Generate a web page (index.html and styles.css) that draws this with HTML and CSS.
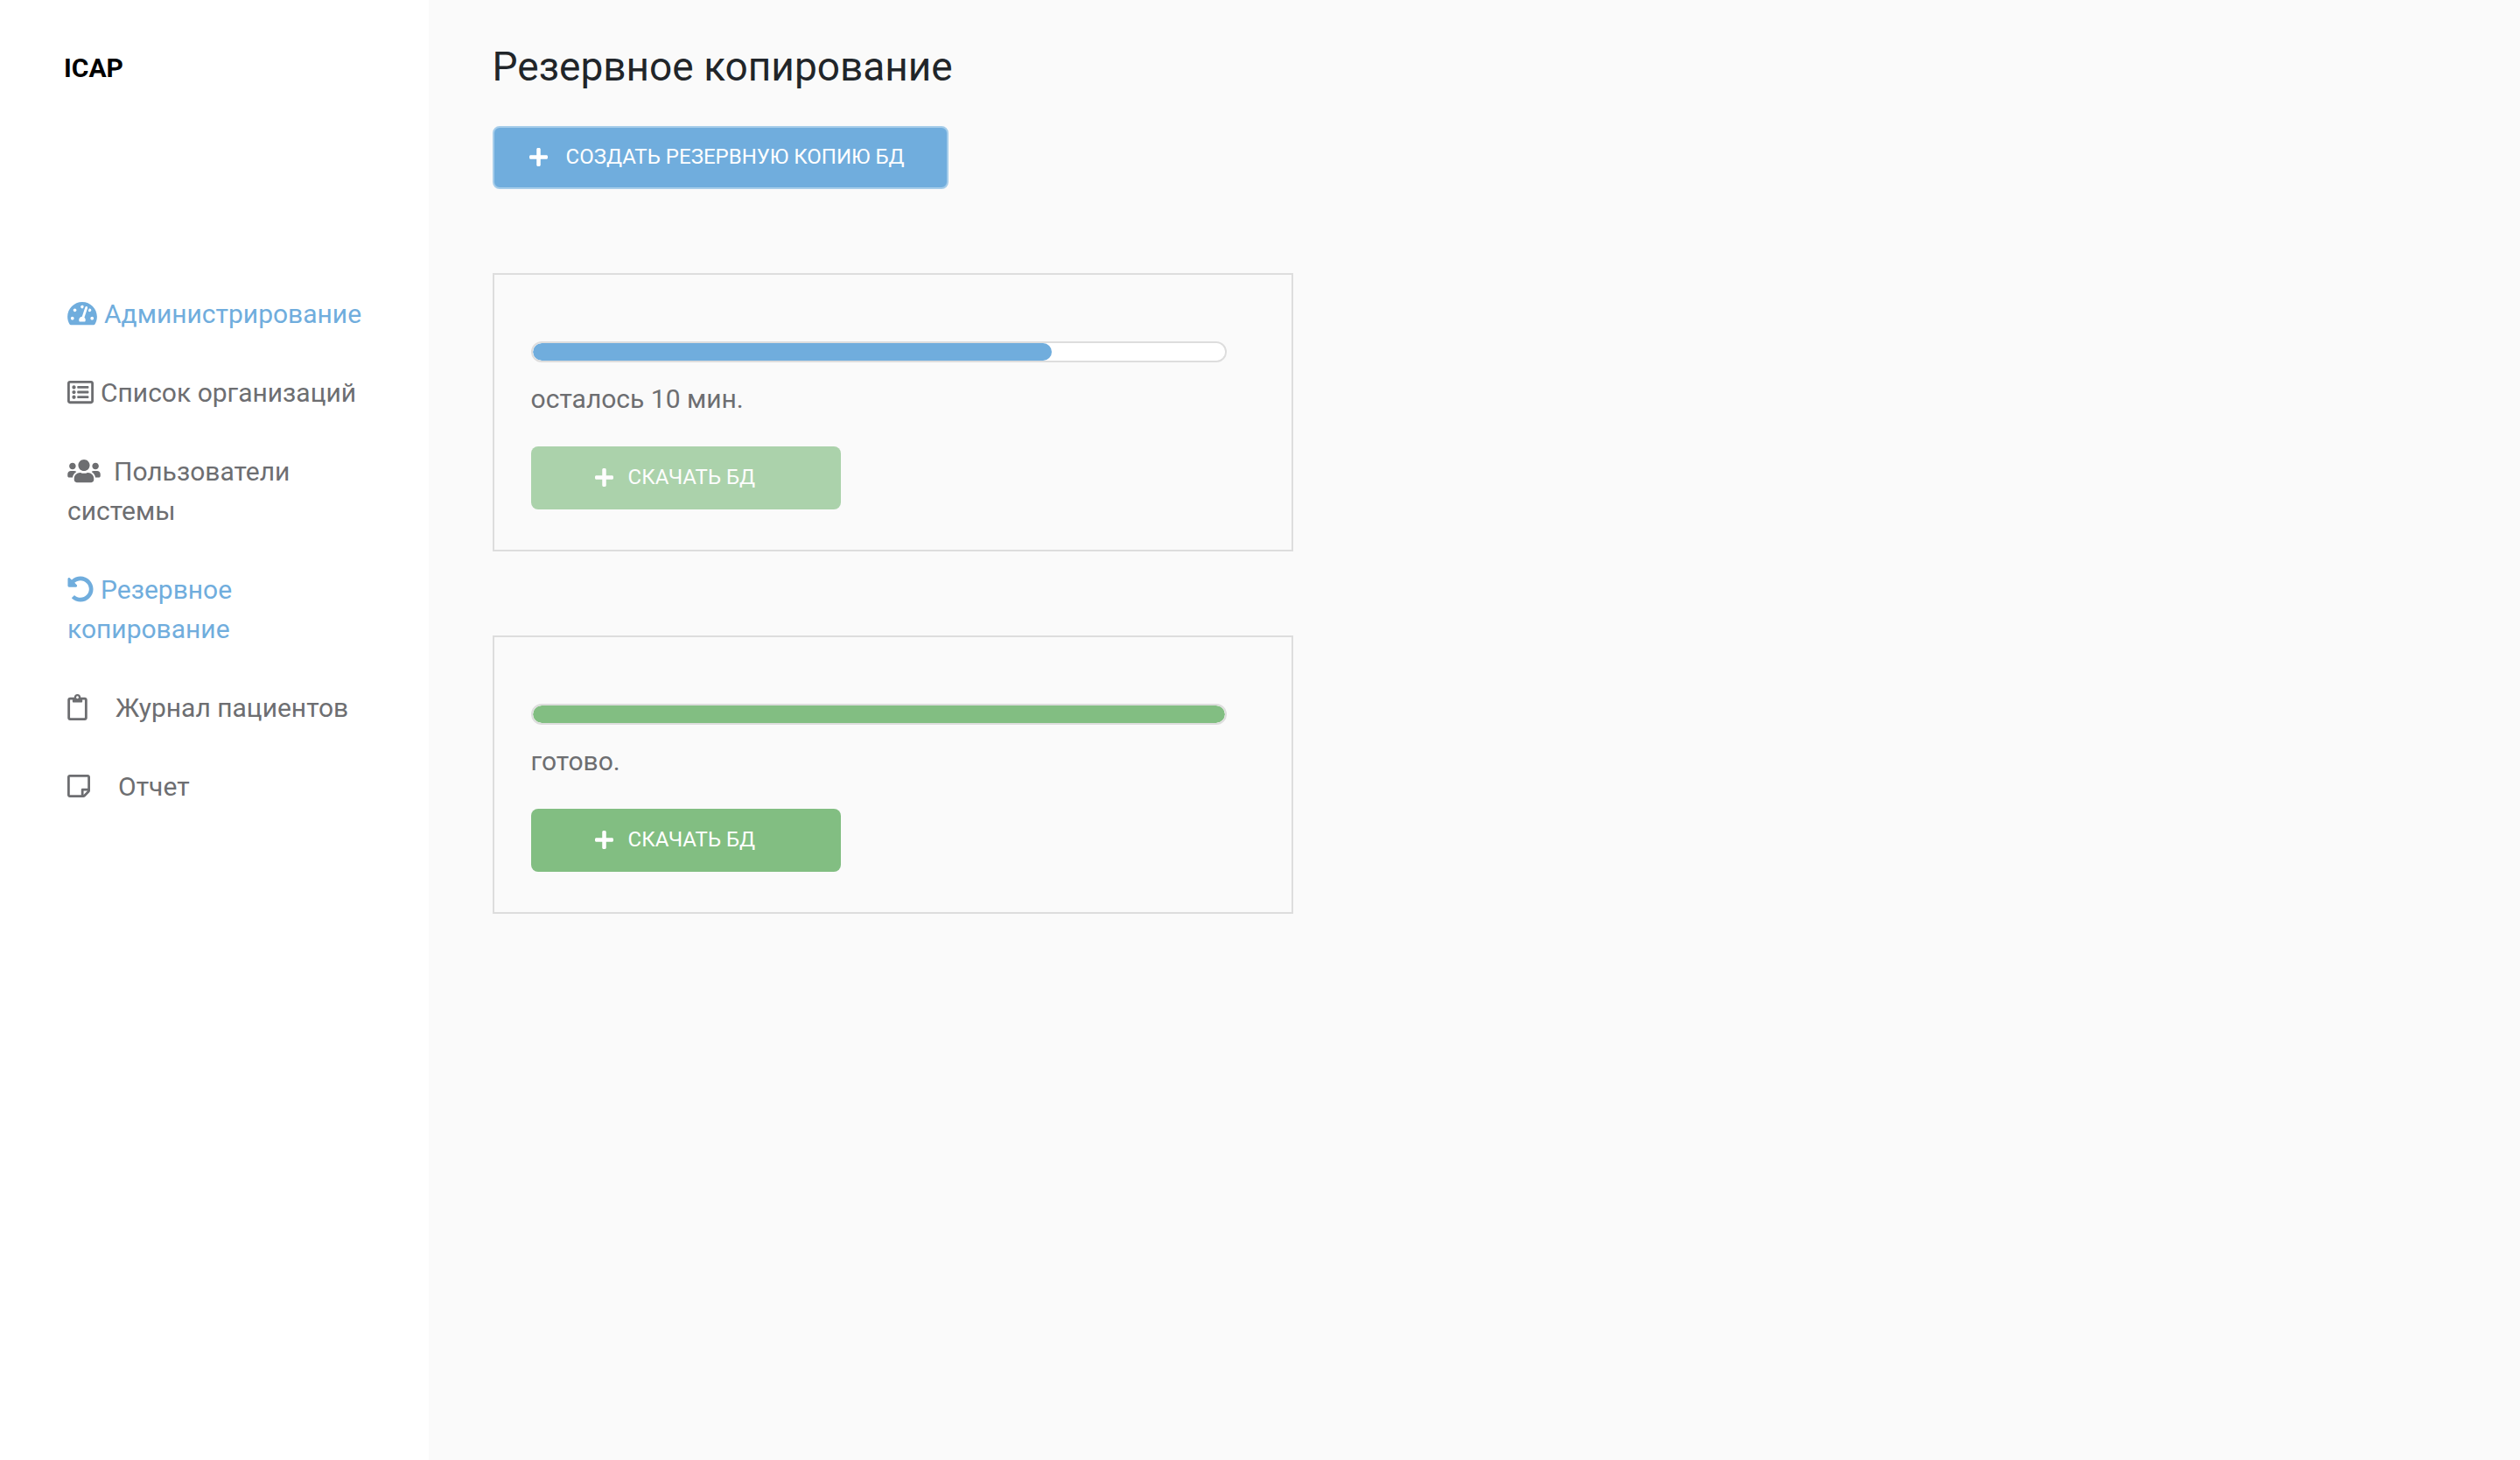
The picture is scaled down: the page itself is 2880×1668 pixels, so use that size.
FILE: index.html
```html
<!DOCTYPE html>
<html lang="ru">
<head>
<meta charset="utf-8">
<meta name="viewport" content="width=device-width, initial-scale=1">
<title>ICAP</title>
<link rel="stylesheet" href="styles.css">
</head>
<body>
<svg class="sprite" aria-hidden="true">
  <symbol id="plus" viewBox="0 32 448 448"><path d="M416 208H272V64c0-17.67-14.33-32-32-32h-32c-17.67 0-32 14.33-32 32v144H32c-17.67 0-32 14.33-32 32v32c0 17.67 14.33 32 32 32h144v144c0 17.67 14.33 32 32 32h32c17.67 0 32-14.33 32-32V304h144c17.67 0 32-14.33 32-32v-32c0-17.67-14.33-32-32-32z"/></symbol>
</svg>
<div class="layout">
  <aside class="sidebar">
    <div class="brand">ICAP</div>
    <nav class="menu">
      <a class="menu-link active" href="#"><svg class="icon icon-dashboard" viewBox="0 0 576 512" aria-hidden="true"><path d="M288 32C128.94 32 0 160.94 0 320c0 52.8 14.25 102.26 39.06 144.8 5.61 9.62 16.3 15.2 27.44 15.2h443c11.14 0 21.83-5.58 27.44-15.2C561.75 422.26 576 372.8 576 320c0-159.06-128.94-288-288-288zm0 64c14.71 0 26.58 10.13 30.32 23.65-1.11 2.26-2.64 4.23-3.45 6.67l-9.22 27.67c-5.13 3.49-10.97 6.01-17.64 6.01-17.67 0-32-14.33-32-32S270.33 96 288 96zM96 384c-17.67 0-32-14.33-32-32s14.33-32 32-32 32 14.33 32 32-14.33 32-32 32zm48-160c-17.67 0-32-14.33-32-32s14.33-32 32-32 32 14.33 32 32-14.33 32-32 32zm246.77-72.41l-61.33 184C343.13 347.33 352 364.54 352 384c0 11.72-3.38 22.55-8.88 32H232.88c-5.5-9.45-8.88-20.28-8.88-32 0-33.94 26.5-61.43 59.9-63.59l61.34-184.01c4.17-12.56 17.73-19.45 30.36-15.17 12.57 4.19 19.35 17.79 15.17 30.36zm14.66 57.2l15.52-46.55c3.47-1.29 7.13-2.23 11.05-2.23 17.67 0 32 14.33 32 32s-14.33 32-32 32c-11.38-.01-20.89-6.28-26.57-15.22zM480 384c-17.67 0-32-14.33-32-32s14.33-32 32-32 32 14.33 32 32-14.33 32-32 32z"/></svg>Администрирование</a>
      <a class="menu-link" href="#"><svg class="icon icon-list" viewBox="0 0 512 512" aria-hidden="true"><path d="M464 32H48C21.49 32 0 53.49 0 80v352c0 26.51 21.49 48 48 48h416c26.51 0 48-21.49 48-48V80c0-26.51-21.49-48-48-48zm-6 400H54a6 6 0 0 1-6-6V86a6 6 0 0 1 6-6h404a6 6 0 0 1 6 6v340a6 6 0 0 1-6 6zm-42-92v24c0 6.627-5.373 12-12 12H204c-6.627 0-12-5.373-12-12v-24c0-6.627 5.373-12 12-12h200c6.627 0 12 5.373 12 12zm0-96v24c0 6.627-5.373 12-12 12H204c-6.627 0-12-5.373-12-12v-24c0-6.627 5.373-12 12-12h200c6.627 0 12 5.373 12 12zm0-96v24c0 6.627-5.373 12-12 12H204c-6.627 0-12-5.373-12-12v-24c0-6.627 5.373-12 12-12h200c6.627 0 12 5.373 12 12zm-252 12c0 19.882-16.118 36-36 36s-36-16.118-36-36 16.118-36 36-36 36 16.118 36 36zm0 96c0 19.882-16.118 36-36 36s-36-16.118-36-36 16.118-36 36-36 36 16.118 36 36zm0 96c0 19.882-16.118 36-36 36s-36-16.118-36-36 16.118-36 36-36 36 16.118 36 36z"/></svg>Список организаций</a>
      <a class="menu-link" href="#"><svg class="icon icon-users" viewBox="0 0 640 512" aria-hidden="true"><path d="M96 224c35.3 0 64-28.7 64-64s-28.7-64-64-64-64 28.7-64 64 28.7 64 64 64zm448 0c35.3 0 64-28.7 64-64s-28.7-64-64-64-64 28.7-64 64 28.7 64 64 64zm32 32h-64c-17.6 0-33.5 7.1-45.1 18.6 40.3 22.1 68.9 62 75.1 109.4h66c17.7 0 32-14.3 32-32v-32c0-35.3-28.7-64-64-64zm-256 0c61.9 0 112-50.1 112-112S381.9 32 320 32 208 82.1 208 144s50.1 112 112 112zm76.8 32h-8.3c-20.8 10-43.9 16-68.5 16s-47.6-6-68.5-16h-8.3C179.6 288 128 339.6 128 403.2V432c0 26.5 21.5 48 48 48h288c26.5 0 48-21.5 48-48v-28.8c0-63.6-51.6-115.2-115.2-115.2zm-223.7-13.4C161.5 263.1 145.6 256 128 256H64c-35.3 0-64 28.7-64 64v32c0 17.7 14.3 32 32 32h65.9c6.3-47.4 34.9-87.3 75.2-109.4z"/></svg>Пользователи системы</a>
      <a class="menu-link active" href="#" aria-current="page"><svg class="icon icon-restore" viewBox="0 0 512 512" aria-hidden="true"><path d="M255.545 8c-66.269.119-126.438 26.233-170.86 68.685L48.971 40.971C33.851 25.851 8 36.559 8 57.941V192c0 13.255 10.745 24 24 24h134.059c21.382 0 32.09-25.851 16.971-40.971l-41.75-41.75c30.864-28.899 70.801-44.907 113.23-45.273 92.398-.798 170.283 73.977 169.484 169.442C423.236 348.009 349.816 424 256 424c-41.127 0-79.997-14.678-110.63-41.556-4.743-4.161-11.906-3.908-16.368.553L89.34 422.659c-4.872 4.872-4.631 12.815.482 17.433C133.798 479.813 192.074 504 256 504c136.966 0 247.999-111.033 248-247.998C504.001 119.193 392.354 7.755 255.545 8z"/></svg>Резервное копирование</a>
      <a class="menu-link" href="#"><svg class="icon icon-clipboard" viewBox="0 0 384 512" aria-hidden="true"><path d="M336 64h-80c0-35.3-28.7-64-64-64s-64 28.7-64 64H48C21.5 64 0 85.5 0 112v352c0 26.5 21.5 48 48 48h288c26.5 0 48-21.5 48-48V112c0-26.5-21.5-48-48-48zM192 40c13.3 0 24 10.7 24 24s-10.7 24-24 24-24-10.7-24-24 10.7-24 24-24zm144 418c0 3.3-2.7 6-6 6H54c-3.3 0-6-2.7-6-6V118c0-3.3 2.7-6 6-6h42v36c0 6.6 5.4 12 12 12h168c6.6 0 12-5.4 12-12v-36h42c3.3 0 6 2.7 6 6z"/></svg>Журнал пациентов</a>
      <a class="menu-link" href="#"><svg class="icon icon-note" viewBox="0 0 448 512" aria-hidden="true"><path d="M448 348.106V80c0-26.51-21.49-48-48-48H48C21.49 32 0 53.49 0 80v351.988c0 26.51 21.49 48 48 48h268.118a48 48 0 0 0 33.941-14.059l83.882-83.882A48 48 0 0 0 448 348.106zm-128 80.005v-76.118h76.118L320 428.111zM400 80v223.988H296c-13.255 0-24 10.745-24 24v104H48V80h352z"/></svg>Отчет</a>
    </nav>
  </aside>
  <main class="content">
    <h1 class="title">Резервное копирование</h1>
    <button class="btn btn-create" type="button"><svg class="plus" aria-hidden="true"><use href="#plus"/></svg>СОЗДАТЬ РЕЗЕРВНУЮ КОПИЮ БД</button>
    <div class="cards">
      <section class="card">
        <progress class="bar" value="75" max="100" aria-labelledby="status-1"></progress>
        <p class="status" id="status-1">осталось 10 мин.</p>
        <button class="btn btn-download" type="button" disabled><svg class="plus" aria-hidden="true"><use href="#plus"/></svg>СКАЧАТЬ БД</button>
      </section>
      <section class="card">
        <progress class="bar bar-done" value="100" max="100" aria-labelledby="status-2"></progress>
        <p class="status" id="status-2">готово.</p>
        <button class="btn btn-download" type="button"><svg class="plus" aria-hidden="true"><use href="#plus"/></svg>СКАЧАТЬ БД</button>
      </section>
    </div>
  </main>
</div>
</body>
</html>
```
FILE: styles.css
```css
* {
  box-sizing: border-box;
}

body {
  margin: 0;
  font-family: Roboto, "Liberation Sans", sans-serif;
  font-size: 30px;
  line-height: 45px;
  color: #6d6e71;
  background: #fafafa;
}

.sprite {
  display: none;
}

.layout {
  display: flex;
  min-height: 100vh;
}

/* Sidebar */
.sidebar {
  flex: 0 0 17%;
  padding: 55px 60px 55px 73px;
  background: #fff;
}

.brand {
  font-weight: 700;
  color: #000;
}

.menu {
  display: flex;
  flex-direction: column;
  gap: 45px;
  margin-top: 236px;
  padding-left: 4px;
}

.menu-link {
  color: inherit;
  text-decoration: none;
}

.menu-link.active {
  color: #70addd;
}

.icon {
  height: 30px;
  margin-right: 8px;
  vertical-align: -4px;
  fill: currentColor;
}

.icon-dashboard { width: 34px; }
.icon-list,
.icon-restore { width: 30px; }
.icon-users { width: 38px; margin-right: 15px; }
.icon-clipboard { width: 23px; margin-right: 32px; }
.icon-note { width: 26px; margin-right: 32px; }

/* Content */
.content {
  flex: 1;
  min-width: 0;
  padding: 46px 73px;
}

.title {
  margin: 0 0 38px;
  font-size: 46px;
  font-weight: 400;
  line-height: 60px;
  color: #212529;
}

.btn {
  display: flex;
  align-items: center;
  height: 72px;
  border: 0;
  border-radius: 8px;
  font: inherit;
  font-size: 24px;
  line-height: 36px;
  color: #fff;
}

.btn:disabled {
  opacity: 0.65;
}

.plus {
  width: 21px;
  height: 21px;
  fill: currentColor;
}

.btn-create {
  gap: 21px;
  padding: 0 48px 2px 40px;
  border: 2px solid #a6cdea;
  background: #70addd;
}

.btn-download {
  gap: 17px;
  width: 354px;
  padding: 0 73px 2px;
  background: #82be82;
}

.cards {
  display: flex;
  flex-direction: column;
  gap: 96px;
  margin-top: 96px;
}

.card {
  width: 915px;
  max-width: 100%;
  padding: 76px 74px 46px 42px;
  border: 2px solid #ddd;
}

.bar {
  display: block;
  width: 100%;
  height: 24px;
  border: 2px solid #ddd;
  border-radius: 12px;
  background: #fff;
  appearance: none;
  overflow: hidden;
}

.bar::-webkit-progress-bar {
  border-radius: 10px;
  background: #fff;
}

.bar::-webkit-progress-value {
  border-radius: 10px;
  background: #70addd;
}

.bar-done::-webkit-progress-value {
  background: #82be82;
}

.status {
  margin: 19px 0 32px;
}
```
